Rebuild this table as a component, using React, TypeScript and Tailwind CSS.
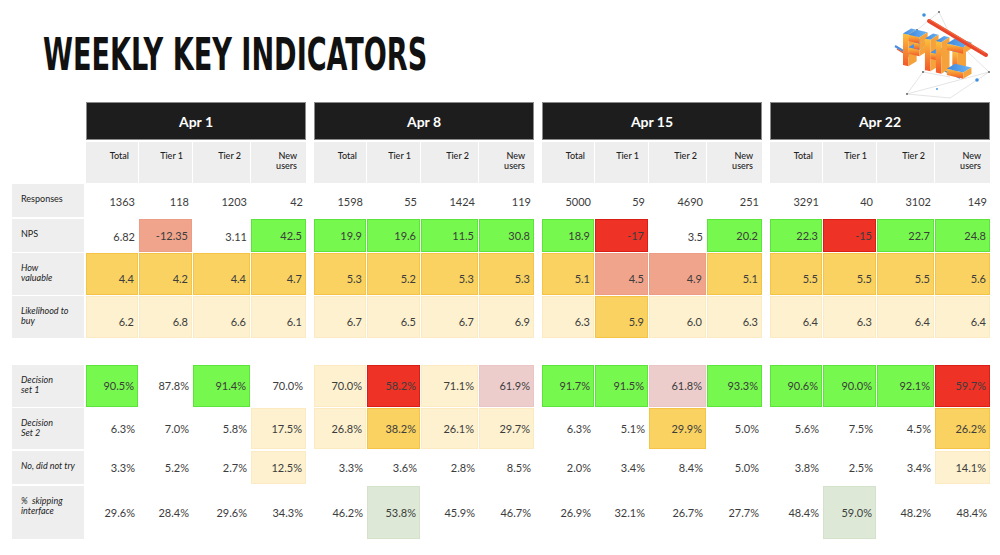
import React from "react";

type Cell = [string, string];

const COLOR: Record<string, string> = {
  W: "",
  G: "bg-[#76f84e] border border-[#5de43c]",
  S: "bg-[#f1a48c] border border-[#eb9d85]",
  O: "bg-[#f9d262] border border-[#f5c446]",
  C: "bg-[#fdf1cf] border border-[#fbeac2]",
  R: "bg-[#ee3326] border border-[#d81e16]",
  P: "bg-[#eccdcc] border border-[#e9c6c5]",
  L: "bg-[#dde9d6] border border-[#d4e2cb]",
};

type Row = { label: string[]; italic: boolean; h: string; mt: string; top: boolean };

const ROWS: Row[] = [
  { label: ["Responses"], italic: false, h: "h-[33px]", mt: "mt-[1px]", top: true },
  { label: ["NPS"], italic: false, h: "h-[33px]", mt: "mt-[2px]", top: true },
  { label: ["How", "valuable"], italic: true, h: "h-[42px]", mt: "mt-[1px]", top: true },
  { label: ["Likelihood to", "buy"], italic: true, h: "h-[42px]", mt: "mt-[1px]", top: true },
  { label: ["Decision", "set 1"], italic: true, h: "h-[42px]", mt: "mt-[27px]", top: false },
  { label: ["Decision", "Set 2"], italic: true, h: "h-[41px]", mt: "mt-[1px]", top: false },
  { label: ["No, did not try"], italic: true, h: "h-[33px]", mt: "mt-[2px]", top: false },
  { label: ["%\u00a0 skipping", "interface"], italic: true, h: "h-[53px]", mt: "mt-[2px]", top: false },
];

const c = (s: string): Cell[] =>
  s.split(" ").map((t) => {
    const [v, k] = t.split("|");
    return [v, k || "W"];
  });

const BLOCKS: { title: string; rows: Cell[][] }[] = [
  {
    title: "Apr 1",
    rows: [
      c("1363 118 1203 42"),
      c("6.82 -12.35|S 3.11 42.5|G"),
      c("4.4|O 4.2|O 4.4|O 4.7|O"),
      c("6.2|C 6.8|C 6.6|C 6.1|C"),
      c("90.5%|G 87.8% 91.4%|G 70.0%"),
      c("6.3% 7.0% 5.8% 17.5%|C"),
      c("3.3% 5.2% 2.7% 12.5%|C"),
      c("29.6% 28.4% 29.6% 34.3%"),
    ],
  },
  {
    title: "Apr 8",
    rows: [
      c("1598 55 1424 119"),
      c("19.9|G 19.6|G 11.5|G 30.8|G"),
      c("5.3|O 5.2|O 5.3|O 5.3|O"),
      c("6.7|C 6.5|C 6.7|C 6.9|C"),
      c("70.0%|C 58.2%|R 71.1%|C 61.9%|P"),
      c("26.8%|C 38.2%|O 26.1%|C 29.7%|C"),
      c("3.3% 3.6% 2.8% 8.5%"),
      c("46.2% 53.8%|L 45.9% 46.7%"),
    ],
  },
  {
    title: "Apr 15",
    rows: [
      c("5000 59 4690 251"),
      c("18.9|G -17|R 3.5 20.2|G"),
      c("5.1|O 4.5|S 4.9|S 5.1|O"),
      c("6.3|C 5.9|O 6.0|C 6.3|C"),
      c("91.7%|G 91.5%|G 61.8%|P 93.3%|G"),
      c("6.3% 5.1% 29.9%|O 5.0%"),
      c("2.0% 3.4% 8.4% 5.0%"),
      c("26.9% 32.1% 26.7% 27.7%"),
    ],
  },
  {
    title: "Apr 22",
    rows: [
      c("3291 40 3102 149"),
      c("22.3|G -15|R 22.7|G 24.8|G"),
      c("5.5|O 5.5|O 5.5|O 5.6|O"),
      c("6.4|C 6.3|C 6.4|C 6.4|C"),
      c("90.6%|G 90.0%|G 92.1%|G 59.7%|R"),
      c("5.6% 7.5% 4.5% 26.2%|O"),
      c("3.8% 2.5% 3.4% 14.1%|C"),
      c("48.4% 59.0%|L 48.2% 48.4%"),
    ],
  },
];

const SUB: string[][] = [["Total"], ["Tier 1"], ["Tier 2"], ["New", "users"]];

const GRID = "grid grid-cols-[52px_53px_57px_55px] gap-x-px";

function Logo() {
  const O = [13, 60];
  const s = 6.3;
  const a = [0.87, 0.2];
  const d = [0.72, -0.45];
  const dd = 1.8;
  const p = (u: number, v: number, w: number) =>
    `${(O[0] + (u * a[0] + v * d[0]) * s).toFixed(2)},${(O[1] + (u * a[1] + v * d[1]) * s - w * s).toFixed(2)}`;
  const boxes: [number, number, number, number][] = [
    // P
    [0, 0, 1, 5],
    [1, 4, 2, 1],
    [1, 2, 2, 1],
    [2, 3, 1, 1],
    // H
    [4, 0, 1, 5],
    [5, 2, 1, 1],
    [6, 0, 1, 5],
    // I
    [8, 0, 3, 1],
    [9, 1, 1, 3],
    [8, 4, 3, 1],
  ];
  const sorted = [...boxes].sort((x, y) => x[0] + x[2] - (y[0] + y[2]) || x[1] - y[1]);
  return (
    <svg width="105" height="95" viewBox="0 0 105 95">
      <defs>
        <linearGradient id="fr" x1="0" y1="0" x2="0" y2="1">
          <stop offset="0" stopColor="#fbc23c" />
          <stop offset="1" stopColor="#f2562a" />
        </linearGradient>
        <linearGradient id="tp" x1="0" y1="0" x2="1" y2="0">
          <stop offset="0" stopColor="#3f86e0" />
          <stop offset="1" stopColor="#6bb6f2" />
        </linearGradient>
      </defs>
      <g stroke="#c9c9c9" strokeWidth="0.5" fill="none">
        <polyline points="49,7 27,25 33,45" />
        <polyline points="49,7 60,30 99,67" />
        <polyline points="17,89 33,67 45,60" />
        <polyline points="17,89 99,67" />
        <polyline points="17,89 60,93 99,67" />
        <polyline points="33,67 60,72" />
      </g>
      <g fill="#555">
        <circle cx="49" cy="7" r="0.9" />
        <circle cx="27" cy="25" r="0.9" />
        <circle cx="17" cy="89" r="0.9" />
        <circle cx="99" cy="67" r="0.9" />
        <circle cx="33" cy="67" r="0.9" />
      </g>
      <line x1="5" y1="41" x2="20" y2="50" stroke="#4a8fe0" strokeWidth="2.2" />
      <line x1="7" y1="44" x2="20" y2="52" stroke="#e9552c" strokeWidth="1.2" />
      <line x1="55" y1="66" x2="70" y2="73" stroke="#4a8fe0" strokeWidth="1.6" />
      {sorted.map(([u, w, du, dw], i) => (
        <g key={i}>
          <polygon
            points={`${p(u, 0, w)} ${p(u + du, 0, w)} ${p(u + du, 0, w + dw)} ${p(u, 0, w + dw)}`}
            fill="url(#fr)"
          />
          <polygon
            points={`${p(u, 0, w + dw)} ${p(u + du, 0, w + dw)} ${p(u + du, dd, w + dw)} ${p(u, dd, w + dw)}`}
            fill="url(#tp)"
          />
          <polygon
            points={`${p(u + du, 0, w)} ${p(u + du, dd, w)} ${p(u + du, dd, w + dw)} ${p(u + du, 0, w + dw)}`}
            fill="#f6a23a"
          />
        </g>
      ))}
      <line x1="39" y1="16" x2="96" y2="50" stroke="#e8452c" strokeWidth="4" strokeLinecap="round" />
      <line x1="40" y1="15" x2="95" y2="48" stroke="#f26a3c" strokeWidth="1.2" strokeLinecap="round" />
      <circle cx="34" cy="10" r="1.8" fill="#3d8fe6" />
      <circle cx="87" cy="75" r="1.8" fill="#3d8fe6" />
      <circle cx="47" cy="84" r="0.9" fill="#3d8fe6" />
    </svg>
  );
}

function Label({ row }: { row: Row }) {
  return (
    <div
      className={`${row.h} ${row.mt} bg-[#eeeeee] pl-[9px] pt-[10px] text-[9px] leading-[10px] text-[#222] ${
        row.italic ? "italic" : ""
      }`}
    >
      {row.label.map((l, i) => (
        <div key={i} className="whitespace-pre">
          {l}
        </div>
      ))}
    </div>
  );
}

function Block({ title, rows }: { title: string; rows: Cell[][] }) {
  return (
    <div className="w-[220px] flex flex-col">
      <div className="h-[38px] bg-[#1d1d1d] border border-[#8a8a8a] flex items-center justify-center text-white font-bold text-[14px]">
        {title}
      </div>
      <div className={`${GRID} mt-[2px]`}>
        {SUB.map((s, i) => (
          <div
            key={i}
            className="h-[41px] bg-[#eeeeee] text-right pr-[9px] pt-[9px] text-[9px] leading-[10px] text-[#222] font-medium"
          >
            {s.map((l, j) => (
              <div key={j}>{l}</div>
            ))}
          </div>
        ))}
      </div>
      {rows.map((r, ri) => {
        const row = ROWS[ri];
        return (
          <div key={ri} className={`${GRID} ${row.mt}`}>
            {r.map(([v, k], ci) => (
              <div
                key={ci}
                className={`${row.h} ${COLOR[k]} flex justify-end pr-[3px] text-[11px] leading-[14px] text-[#3c3c3c] ${
                  row.top ? "items-end pb-[8px]" : "items-center"
                }`}
              >
                {v}
              </div>
            ))}
          </div>
        );
      })}
    </div>
  );
}

export default function App() {
  return (
    <div className="w-[1000px] h-[555px] bg-white overflow-hidden font-['Lato','Noto_Sans',sans-serif]">
      <div className="h-[102px] flex justify-between items-start">
        <div className="ml-[43px] mt-[32px] whitespace-nowrap">
          <div className="inline-block origin-left scale-x-[0.67] font-['DejaVu_Sans_Condensed','DejaVu_Sans',sans-serif] font-bold text-[45px] leading-[45px] text-[#111]">
            WEEKLY KEY INDICATORS
          </div>
        </div>
        <div className="mt-[5px] mr-[5px]">
          <Logo />
        </div>
      </div>
      <div className="flex pl-[12px]">
        <div className="w-[72px] flex flex-col">
          <div className="h-[81px]" />
          {ROWS.map((r, i) => (
            <Label key={i} row={r} />
          ))}
        </div>
        <div className="ml-[2px] flex gap-[8px]">
          {BLOCKS.map((b) => (
            <Block key={b.title} title={b.title} rows={b.rows} />
          ))}
        </div>
      </div>
    </div>
  );
}
